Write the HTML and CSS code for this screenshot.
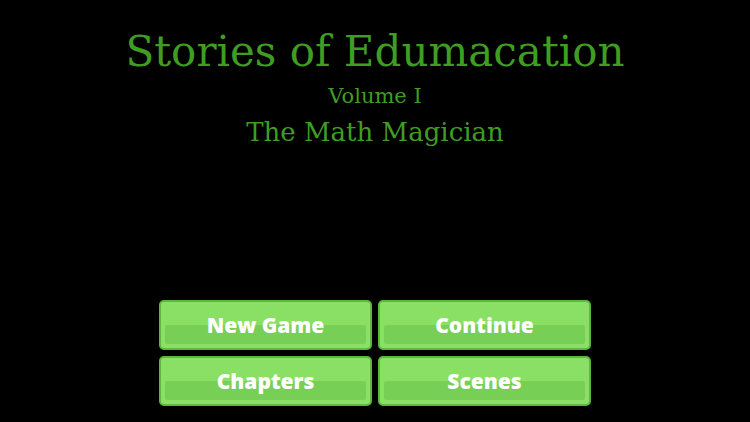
FILE: index.html
```html
<html>
  <head>
    <link rel="stylesheet" href="styles.css">
    <title>Stories of Edumacation</title>
  </head>
  <body>
    <div class="screen">
      <div class="heading">
        <h1 class="title">Stories of Edumacation</h1>
        <div class="volume">Volume I</div>
        <div class="subtitle">The Math Magician</div>
      </div>
      <div class="menu">
        <button class="menu-button"><span>New Game</span></button>
        <button class="menu-button"><span>Continue</span></button>
        <button class="menu-button"><span>Chapters</span></button>
        <button class="menu-button"><span>Scenes</span></button>
      </div>
    </div>
  </body>
</html>
```

FILE: styles.css
```css
body {
  margin: 0;
  background: #000;
}

.screen {
  width: 750px;
  height: 422px;
  display: flex;
  flex-direction: column;
  align-items: center;
  justify-content: space-between;
  overflow: hidden;
}

.heading {
  display: flex;
  flex-direction: column;
  align-items: center;
  padding-top: 28px;
  font-family: "DejaVu Serif", serif;
  color: #3f9d22;
}

.title {
  margin: 0;
  font-size: 42px;
  font-weight: normal;
  line-height: 48px;
}

.volume {
  margin-top: 8px;
  font-size: 21px;
  line-height: 24px;
}

.subtitle {
  margin-top: 9px;
  font-size: 26px;
  line-height: 30px;
}

.menu {
  display: grid;
  grid-template-columns: 213px 213px;
  grid-auto-rows: 50px;
  column-gap: 6px;
  row-gap: 6px;
  margin-bottom: 16px;
}

.menu-button {
  position: relative;
  border: 2px solid #5db93d;
  border-radius: 5px;
  background: #89e065;
  color: #fff;
  font-family: "Open Sans", "Liberation Sans", sans-serif;
  font-weight: 800;
  font-size: 21px;
  padding: 0;
}

/* darker lower band inside each button */
.menu-button::before {
  content: "";
  position: absolute;
  left: 4px;
  right: 4px;
  top: 23px;
  bottom: 4px;
  background: #78cf55;
  border-radius: 2px;
}

.menu-button span {
  position: relative;
}
```
